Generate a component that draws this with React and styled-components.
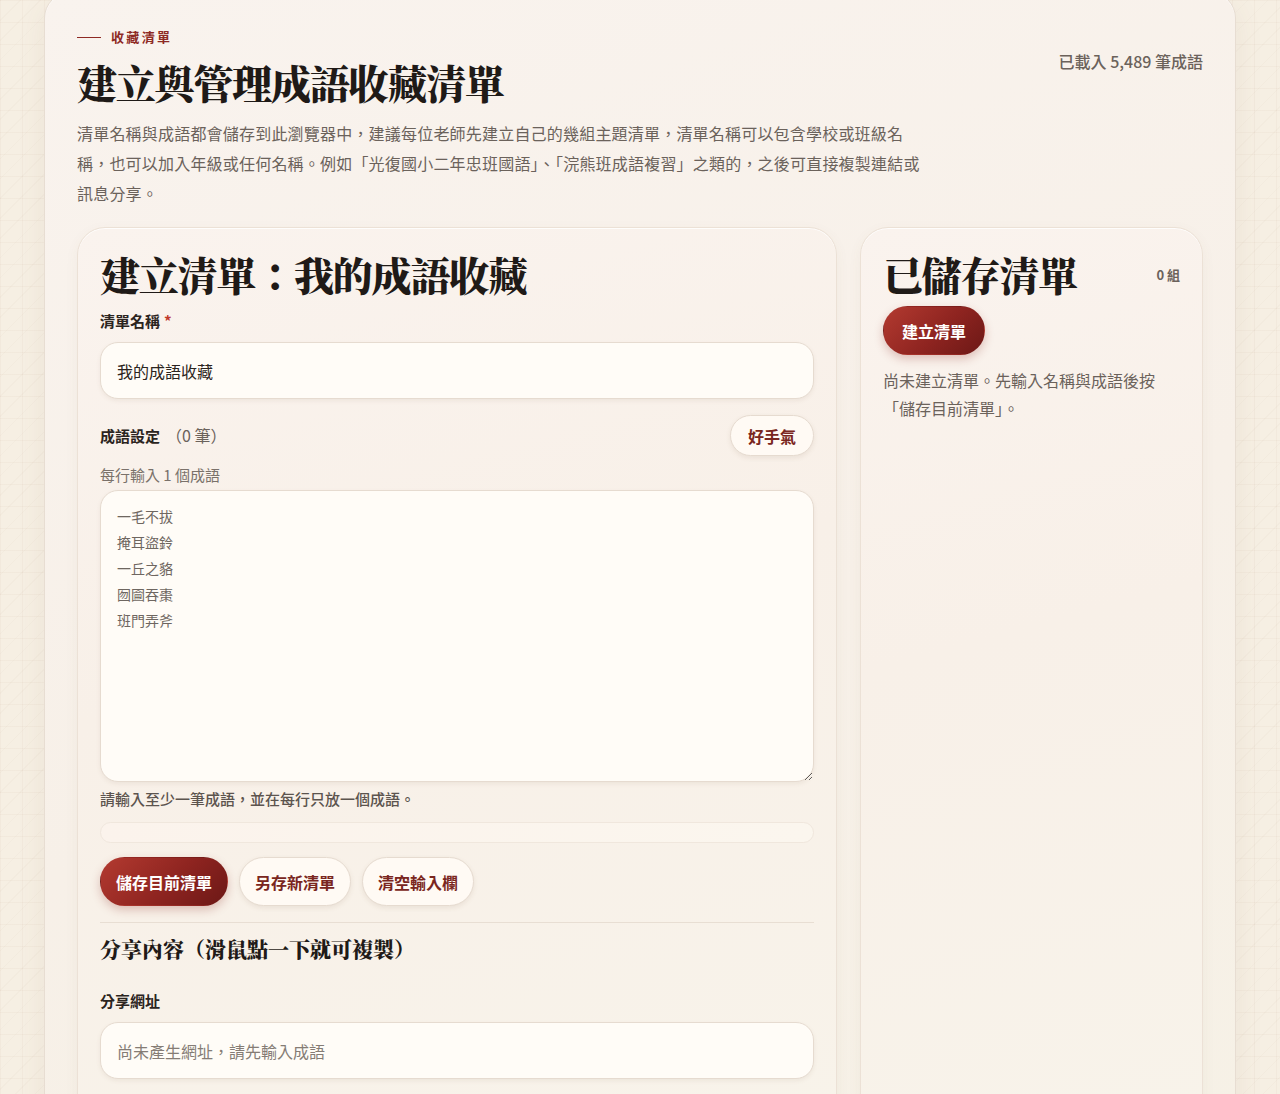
import React from 'react'
import styled, { createGlobalStyle } from 'styled-components'

const sans = `"Noto Sans CJK TC", "Noto Sans", sans-serif`
const serif = `"Noto Serif CJK TC", "Noto Serif TC", "Noto Sans CJK TC", serif`

const GlobalStyle = createGlobalStyle`
    html, body {
        margin: 0;
        padding: 0;
    }
    body {
        font-family: ${sans};
        color: #2b2420;
        background-color: #f6efe3;
        background-image:
            repeating-linear-gradient(135deg, rgba(160, 130, 100, 0.035) 0 1px, transparent 1px 14px),
            linear-gradient(rgba(170, 140, 110, 0.06) 1px, transparent 1px),
            linear-gradient(90deg, rgba(170, 140, 110, 0.06) 1px, transparent 1px);
        background-size: auto, 22px 22px, 22px 22px;
        overflow: hidden;
        height: 1094px;
    }
    * {
        box-sizing: border-box;
    }
`

const Shell = styled.main`
    width: 1192px;
    margin: -8px auto 0;
    min-height: 1120px;
    padding: 35px 32px 40px;
    border-radius: 26px;
    border: 1px solid #e7ddd2;
    background: linear-gradient(160deg, #f9f3ee 0%, #f7f0e8 55%, #f6f1e6 100%);
    box-shadow: 0 10px 30px rgba(120, 90, 60, 0.08), inset 0 1px 0 rgba(255, 255, 255, 0.7);
`

const Header = styled.header`
    display: flex;
    justify-content: space-between;
    align-items: flex-start;
`

const HeaderText = styled.div`
    display: flex;
    flex-direction: column;
`

const Eyebrow = styled.div`
    display: flex;
    align-items: center;
    gap: 10px;
    font-size: 13px;
    font-weight: 700;
    letter-spacing: 0.18em;
    color: #8e2a24;
    line-height: 18px;
    &::before {
        content: '';
        width: 24px;
        height: 1px;
        background: #8e2a24;
    }
`

const PageTitle = styled.h1`
    margin: 10px 0 10px;
    font-family: ${serif};
    font-size: 40px;
    font-weight: 900;
    line-height: 52px;
    letter-spacing: -0.03em;
    color: #1f1a17;
`

const Lead = styled.p`
    margin: 0;
    max-width: 860px;
    font-size: 16px;
    letter-spacing: 0.2px;
    line-height: 30px;
    color: #6b625b;
`

const Loaded = styled.div`
    margin-top: 21px;
    font-size: 16px;
    font-weight: 500;
    color: #6b625b;
`

const Columns = styled.div`
    display: grid;
    grid-template-columns: 760px 343px;
    gap: 23px;
    margin-top: 19px;
    align-items: stretch;
`

const Card = styled.section`
    border-radius: 28px;
    border: 1px solid #ece1d6;
    background: linear-gradient(165deg, #faf3ee 0%, #f8f0e8 45%, #f8f3ea 100%);
    box-shadow: 0 4px 14px rgba(120, 90, 60, 0.05), inset 0 1px 0 rgba(255, 255, 255, 0.8);
    padding: 18px 22px 30px;
    min-height: 900px;
`

const CardHead = styled.div`
    display: flex;
    justify-content: space-between;
    align-items: center;
`

const CardTitle = styled.h2`
    margin: 0;
    font-family: ${serif};
    font-size: 40px;
    font-weight: 900;
    line-height: 56px;
    letter-spacing: -0.03em;
    color: #1f1a17;
`

const Count = styled.span`
    font-size: 13px;
    font-weight: 700;
    color: #6b625b;
`

const Label = styled.label`
    display: block;
    font-size: 15px;
    font-weight: 700;
    color: #2b2420;
    line-height: 22px;
    margin: ${p => p.$m || '0'};
`

const Req = styled.span`
    color: #c0392b;
    margin-left: 4px;
`

const Field = styled.input`
    display: block;
    width: 100%;
    height: 57px;
    padding: 0 16px;
    border-radius: 18px;
    border: 1px solid #e6dbd0;
    background: #fffcf7;
    box-shadow: 0 2px 4px rgba(120, 90, 60, 0.08);
    font-family: ${sans};
    font-size: 16px;
    color: #2b2420;
    outline: none;
    margin-top: 10px;
    &::placeholder {
        color: #857c75;
    }
`

const Row = styled.div`
    display: flex;
    justify-content: space-between;
    align-items: center;
    margin-top: 16px;
`

const Muted = styled.span`
    font-size: 16px;
    font-weight: 400;
    color: #6b625b;
    margin-left: 6px;
`

const Note = styled.div`
    font-size: 15px;
    color: #7a716a;
    line-height: 22px;
    margin-top: 8px;
`

const Area = styled.textarea`
    display: block;
    width: 100%;
    height: 292px;
    margin-top: 4px;
    padding: 12px 16px;
    border-radius: 18px;
    border: 1px solid #e6dbd0;
    background: #fffcf7;
    box-shadow: 0 2px 4px rgba(120, 90, 60, 0.08);
    font-family: ${sans};
    font-size: 14px;
    line-height: 26px;
    color: #2b2420;
    outline: none;
    &::placeholder {
        color: #6e6660;
    }
`

const Hint = styled.div`
    font-size: 15px;
    font-weight: 500;
    color: #5c544e;
    line-height: 22px;
    margin-top: 6px;
`

const Progress = styled.div`
    height: 21px;
    margin-top: 12px;
    border-radius: 11px;
    border: 1px solid #f0e7dd;
    background: linear-gradient(90deg, #fbf3ec, #fbf6ee);
`

const Actions = styled.div`
    display: flex;
    gap: 11px;
    margin-top: 14px;
    padding-bottom: 16px;
    border-bottom: 1px solid #e8ded3;
`

const Button = styled.button`
    height: ${p => (p.$small ? '41px' : '49px')};
    padding: 0 ${p => p.$pad || (p.$small ? '17px' : '15px')};
    border-radius: 999px;
    font-family: ${sans};
    font-size: 16px;
    font-weight: 700;
    cursor: pointer;
    white-space: nowrap;
    color: ${p => (p.$primary ? '#fff' : '#7a2620')};
    border: 1px solid ${p => (p.$primary ? 'transparent' : '#e6dbd0')};
    background: ${p => (p.$primary
        ? 'linear-gradient(135deg, #b33a30 0%, #8e2420 55%, #6c1816 100%)'
        : '#fffaf4')};
    box-shadow: ${p => (p.$primary
        ? '0 4px 10px rgba(140, 40, 30, 0.25)'
        : '0 2px 5px rgba(120, 90, 60, 0.1)')};
`

const SubTitle = styled.h3`
    margin: 9px 0 0;
    font-family: ${serif};
    font-size: 21px;
    font-weight: 900;
    line-height: 32px;
    color: #1f1a17;
`

const Empty = styled.p`
    margin: 11px 0 0;
    font-size: 16px;
    line-height: 28px;
    color: #6b625b;
`

const Side = styled.div`
    margin-top: 4px;
`

const sample = ['一毛不拔', '掩耳盜鈴', '一丘之貉', '囫圇吞棗', '班門弄斧'].join('\n')

export default function App() {
    return (
        <>
            <GlobalStyle />
            <Shell>
                <Header>
                    <HeaderText>
                        <Eyebrow>收藏清單</Eyebrow>
                        <PageTitle>建立與管理成語收藏清單</PageTitle>
                        <Lead>
                            清單名稱與成語都會儲存到此瀏覽器中，建議每位老師先建立自己的幾組主題清單，清單名稱可以包含學校或班級名<br />
                            稱，也可以加入年級或任何名稱。例如「光復國小二年忠班國語」、「浣熊班成語複習」之類的，之後可直接複製連結或<br />
                            訊息分享。
                        </Lead>
                    </HeaderText>
                    <Loaded>已載入 5,489 筆成語</Loaded>
                </Header>

                <Columns>
                    <Card>
                        <CardTitle>建立清單：我的成語收藏</CardTitle>
                        <Label $m="8px 0 0">清單名稱<Req>*</Req></Label>
                        <Field defaultValue="我的成語收藏" />

                        <Row>
                            <Label>成語設定<Muted>（0 筆）</Muted></Label>
                            <Button $small>好手氣</Button>
                        </Row>
                        <Note>每行輸入 1 個成語</Note>
                        <Area placeholder={sample} />
                        <Hint>請輸入至少一筆成語，並在每行只放一個成語。</Hint>
                        <Progress />

                        <Actions>
                            <Button $primary>儲存目前清單</Button>
                            <Button>另存新清單</Button>
                            <Button>清空輸入欄</Button>
                        </Actions>

                        <SubTitle>分享內容（滑鼠點一下就可複製）</SubTitle>
                        <Label $m="26px 0 0">分享網址</Label>
                        <Field placeholder="尚未產生網址，請先輸入成語" readOnly />
                    </Card>

                    <Card>
                        <CardHead>
                            <CardTitle>已儲存清單</CardTitle>
                            <Count>0 組</Count>
                        </CardHead>
                        <Side>
                            <Button $primary $pad="18px">建立清單</Button>
                        </Side>
                        <Empty>尚未建立清單。先輸入名稱與成語後按「儲存目前清單」。</Empty>
                    </Card>
                </Columns>
            </Shell>
        </>
    )
}
